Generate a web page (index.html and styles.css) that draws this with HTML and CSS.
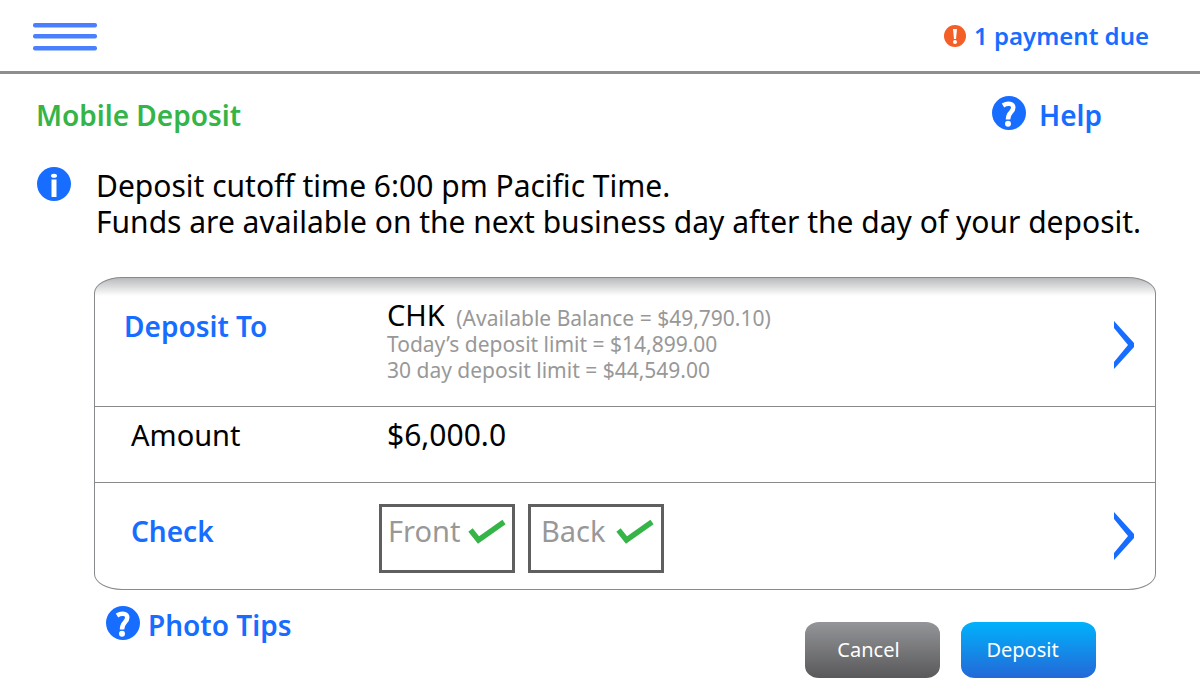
FILE: index.html
```html
<!DOCTYPE html>
<html lang="en">
<head>
<meta charset="utf-8">
<meta name="viewport" content="width=device-width, initial-scale=1">
<title>Mobile Deposit</title>
<link rel="stylesheet" href="styles.css">
</head>
<body>
<header class="topbar">
  <button class="menu" type="button" aria-label="Menu">
    <svg width="66" height="30" viewBox="0 0 66 30" fill="#4a80ff"><rect x="1" y="2" width="64" height="4.500" rx="2"/><rect x="1" y="13" width="64" height="4.500" rx="2"/><rect x="1" y="25" width="64" height="4.500" rx="2"/></svg>
  </button>
  <a class="alert" href="#">
    <svg width="22" height="22" viewBox="0 0 22 22"><circle cx="11" cy="11" r="11" fill="#f35f26"/><path d="M9 4h4l-1 10h-2z" fill="#fff"/><circle cx="11" cy="17" r="2" fill="#fff"/></svg>
    1 payment due
  </a>
</header>
<main class="page">
  <div class="title-row">
    <h1 class="title">Mobile Deposit</h1>
    <a class="help" href="#">
      <svg class="icon" viewBox="0 0 34 34"><circle cx="17" cy="17" r="17" fill="#166dff"/><path d="M11 9.500c5-3.200 10.300-1.800 10.300 2 0 4.800-5.300 4.500-5.300 12" fill="none" stroke="#fff" stroke-width="4.500"/><circle cx="16" cy="27.800" r="3" fill="#fff"/></svg>
      Help
    </a>
  </div>
  <section class="notice">
    <svg class="icon" viewBox="0 0 34 34"><circle cx="17" cy="17" r="17" fill="#166dff"/><ellipse cx="17" cy="8.800" rx="3" ry="2" fill="#fff"/><path d="M14.500 12.500h5V30h-5z" fill="#fff"/></svg>
    <p class="notice-text">Deposit cutoff time 6:00 pm Pacific Time.<br>Funds are available on the next business day after the day of your deposit.</p>
  </section>
  <form class="form">
    <div class="card">
      <div class="row row-account">
        <span class="label label-link">Deposit To</span>
        <div class="value account">
          <p class="account-line"><span class="account-name">CHK</span> (Available Balance = $49,790.10)</p>
          <p class="account-line">Today’s deposit limit = $14,899.00</p>
          <p class="account-line">30 day deposit limit = $44,549.00</p>
        </div>
        <button class="chevron" type="button" aria-label="Choose account">
          <svg width="20" height="48" viewBox="0 0 20 48"><path d="M0 0 20 22v4L0 48v-7l14-17L0 7z" fill="#166dff"/></svg>
        </button>
      </div>
      <div class="row row-amount">
        <label class="label" for="amount">Amount</label>
        <input class="value amount" id="amount" type="text" value="$6,000.0">
      </div>
      <div class="row row-check">
        <span class="label label-link">Check</span>
        <div class="value photos">
          <button class="photo photo-front" type="button">Front
            <svg width="38" height="26" viewBox="0 0 38 26"><path d="m2.500 11 8 10L36 3" fill="none" stroke="#35b448" stroke-width="5.500"/></svg>
          </button>
          <button class="photo photo-back" type="button">Back
            <svg width="38" height="26" viewBox="0 0 38 26"><path d="m2.500 11 8 10L36 3" fill="none" stroke="#35b448" stroke-width="5.500"/></svg>
          </button>
        </div>
        <button class="chevron" type="button" aria-label="Edit check photos">
          <svg width="20" height="48" viewBox="0 0 20 48"><path d="M0 0 20 22v4L0 48v-7l14-17L0 7z" fill="#166dff"/></svg>
        </button>
      </div>
    </div>
    <div class="footer">
      <a class="tips" href="#">
        <svg class="icon" viewBox="0 0 34 34"><circle cx="17" cy="17" r="17" fill="#166dff"/><path d="M11 9.500c5-3.200 10.300-1.800 10.300 2 0 4.800-5.300 4.500-5.300 12" fill="none" stroke="#fff" stroke-width="4.500"/><circle cx="16" cy="27.800" r="3" fill="#fff"/></svg>
        Photo Tips
      </a>
      <div class="actions">
        <button class="btn btn-cancel" type="button">Cancel</button>
        <button class="btn btn-deposit" type="submit">Deposit</button>
      </div>
    </div>
  </form>
</main>
</body>
</html>
```
FILE: styles.css
```css
* { box-sizing: border-box; }
body { margin: 0; background: #fff; color: #000; font: 29px/36px "Noto Sans", "Open Sans", sans-serif; }
p, h1 { margin: 0; }
button, input { margin: 0; padding: 0; border: 0; background: none; color: inherit; font: inherit; }
button { cursor: pointer; }
a { color: #166dff; text-decoration: none; }
svg { display: block; flex: none; }
.icon { width: 34px; height: 34px; }
.topbar { display: flex; align-items: center; justify-content: space-between; height: 74px; padding: 0 51px 0 32px; border-bottom: 3px solid #8d8e8d; }
.alert { display: flex; align-items: center; gap: 8px; font-size: 24px; font-weight: 600; }
.title-row { display: flex; align-items: flex-start; justify-content: space-between; padding: 22px 98px 0 36px; }
.title { padding-top: 1px; color: #35b448; font-size: 28px; font-weight: 600; line-height: 36px; }
.help { display: flex; align-items: flex-start; gap: 13px; padding-top: 1px; font-size: 28px; font-weight: 600; }
.help .icon, .tips .icon { margin-top: -1px; }
.notice { display: flex; gap: 25px; padding: 34px 32px 0 37px; }
.notice-text { padding-top: 1px; font-size: 30px; }
.form { padding: 37px 44px 0 94px; }
.card { border: 1px solid #88898a; border-radius: 28px / 16px; background: linear-gradient(#b9babc, #fff 18px); }
.row { display: flex; align-items: flex-start; padding: 0 21px 0 29px; }
.row + .row { border-top: 1px solid #88898a; }
.label { flex: none; width: 263px; }
.label-link { color: #166dff; font-size: 28px; font-weight: 600; }
.value { flex: 1; min-width: 0; }
.row-account { min-height: 128px; padding-top: 24px; }
.row-account .label { margin-top: 6px; }
.account { color: #989898; font-size: 21px; line-height: 26px; }
.account-name { margin-right: 6px; color: #000; font-size: 29px; }
.row-account .chevron { margin-top: 19px; }
.row-amount { min-height: 76px; padding-top: 10px; padding-left: 36px; }
.row-amount .label, .row-check .label { width: 256px; }
.amount { font-size: 30px; }
.row-check { min-height: 107px; padding: 21px 21px 16px 36px; }
.row-check .label { margin-top: 9px; }
.row-check .value { margin-left: -8px; }
.row-check .chevron { margin-top: 8px; }
.photos { display: flex; gap: 13px; }
.photo { display: flex; align-items: flex-start; gap: 8px; width: 136px; height: 69px; padding: 6px; border: 3px solid #5f5f5f; color: #989898; }
.photo-back { gap: 10px; padding-left: 10px; }
.photo svg { margin-top: 6px; }
.footer { display: flex; align-items: flex-start; justify-content: space-between; padding: 17px 60px 0 12px; }
.tips { display: flex; align-items: flex-start; gap: 8px; font-size: 28px; font-weight: 600; }
.actions { display: flex; gap: 21px; margin-top: 15px; }
.btn { width: 135px; height: 56px; padding-right: 12px; border-radius: 14px / 12px; color: #fff; font-size: 20px; }
.btn-cancel { padding-right: 8px; background: linear-gradient(#949598, #59595b); }
.btn-deposit { background: linear-gradient(#00b2fb, #2468d8); }
```
